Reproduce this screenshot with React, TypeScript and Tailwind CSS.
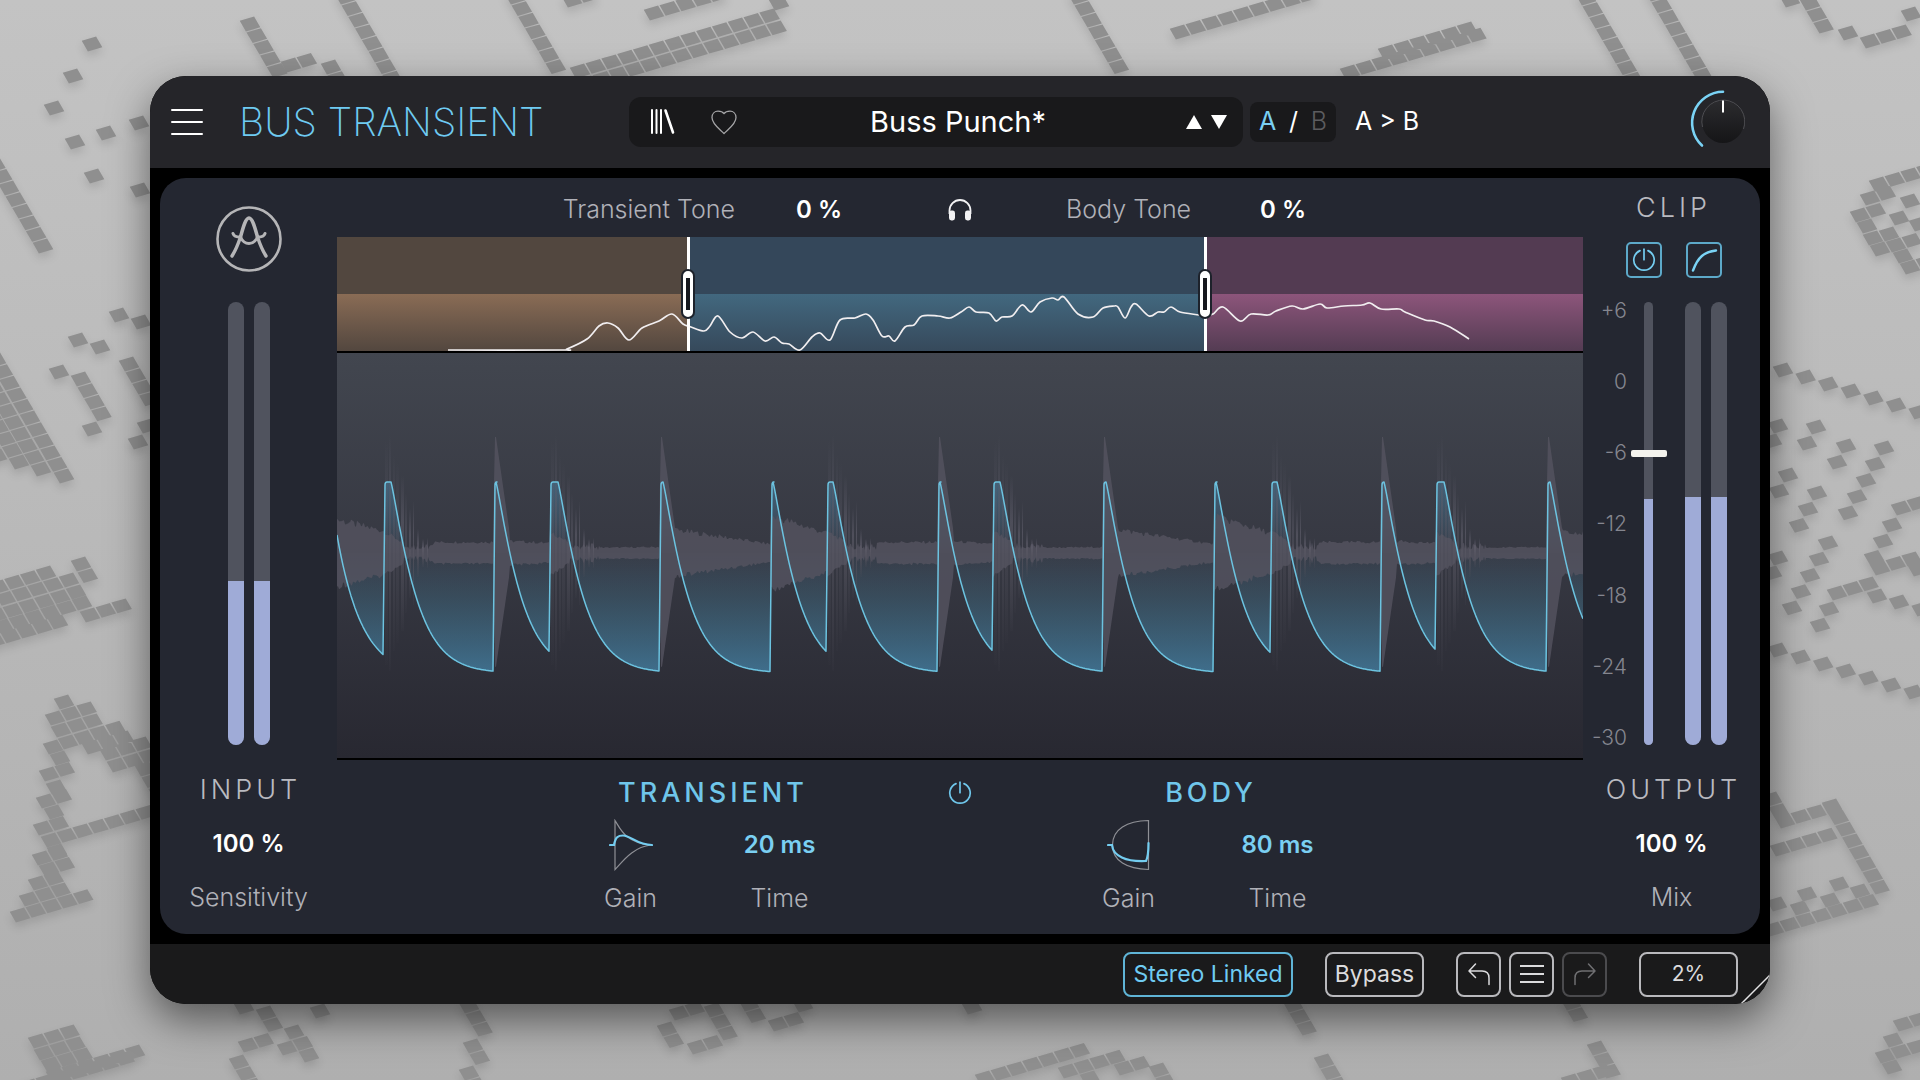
import { useState } from 'react';

// One tile of the backdrop grid: u runs along a row, v down a column
const U = [15.8, -4.6];
const V = [6.8, 11.6];

// [x, y, count, step along u, step along v], x and y being the centre of the first tile
const TILE_RUNS = [
  // top left
  [92, 44, 1, 0, 0], [73, 76, 1, 0, 0], [54, 108, 1, 0, 0], [75, 142, 1, 0, 0],
  [106, 133, 1, 0, 0], [139, 123, 1, 0, 0], [94, 176, 1, 0, 0], [140, 190, 1, 0, 0],
  [250, 24, 5, 0, 1], [291, 65, 2, 1, 0], [331, 67, 2, 0, 1],
  [345, -3, 8, 0, 1], [515, -3, 7, 0, 1],
  [580, 71, 13, 1, 0], [587, 83, 13, 1, 0], [654, 13, 5, 1, 0], [779, 3, 1, 0, 0], [572, 0, 2, 1, 0],
  // left edge
  [43, 246, 8, 0, -1],
  [119, 315, 1, 0, 0], [141, 322, 1, 0, 0], [78, 340, 1, 0, 0], [100, 347, 1, 0, 0],
  [59, 372, 1, 0, 0], [81, 379, 4, 0, 1], [92, 429, 1, 0, 0], [129, 364, 4, 0, 1],
  [147, 426, 1, 0, 0], [138, 442, 1, 0, 0],
  [64, 476, 11, 0, -1], [41, 469, 10, 0, -1], [19, 462, 8, 0, -1], [-3, 456, 6, 0, -1],
  [81, 564, 2, 0, 1], [46, 573, 4, -1, 0], [69, 580, 6, -1, 0], [76, 592, 6, -1, 0],
  [82, 603, 6, -1, 0], [58, 622, 5, -1, 0], [90, 615, 3, 1, 0],
  // lower left
  [64, 702, 1, 0, 0], [55, 718, 3, 1, 0], [61, 730, 3, 1, 0], [68, 742, 4, 1, 0],
  [92, 747, 3, 1, 0], [110, 753, 3, 1, 0], [117, 765, 3, 1, 0], [145, 769, 3, 0, 1],
  [53, 747, 1, 0, 0], [60, 758, 1, 0, 0], [49, 774, 2, 1, 0], [56, 787, 1, 0, 0],
  [46, 801, 2, 1, 0], [54, 812, 1, 0, 0], [43, 828, 2, 1, 0], [51, 840, 7, 1, 0],
  [57, 851, 1, 0, 0], [42, 858, 2, 1, 0], [49, 869, 2, 1, 0], [38, 883, 2, 1, 0],
  [29, 899, 3, 1, 0], [20, 915, 5, 1, 0],
  [38, 1041, 3, 1, 0], [44, 1053, 3, 1, 0], [51, 1064, 3, 1, 0], [56, 1075, 6, 1, 0], [30, 1086, 7, 1, 0],
  [244, 1007, 1, 0, 0], [266, 1013, 2, 0, 1], [248, 1045, 2, 1, 0], [294, 1032, 1, 0, 0],
  [287, 1048, 2, 1, 0], [309, 1055, 1, 0, 0], [239, 1062, 3, 0, 1], [320, 1011, 1, 0, 0],
  // bottom edge
  [469, 1006, 3, 0, 1], [473, 1046, 2, 0, 1], [469, 1073, 2, 0, 1],
  [679, 1013, 2, 1, 0], [714, 1010, 3, 0, 1], [667, 1029, 2, 0, 1], [697, 1047, 2, 1, 0],
  [749, 1004, 2, 0, 1], [778, 1024, 2, 1, 0], [803, 1005, 1, 0, 0], [972, 1007, 1, 0, 0],
  [985, 1078, 7, 1, 0], [1068, 1071, 4, 1, 0], [1124, 1068, 2, 1, 0], [1159, 1070, 2, 0, 1], [1090, 1078, 1, 0, 0],
  [1293, 1005, 3, 0, 1], [1324, 1061, 3, 0, 1], [1571, 1003, 2, 0, 1], [1597, 1048, 3, 0, 1], [1571, 1081, 3, 1, 0],
  // top right
  [1078, -3, 7, 0, 1], [1180, 32, 9, 1, 0], [1350, 72, 9, 1, 0], [1388, 52, 6, 1, 0],
  [1586, -2, 8, 0, 1], [1655, -6, 8, 0, 1],
  [1790, 0, 1, 0, 0], [1810, 3, 3, 0, 1], [1848, 33, 1, 0, 0], [1870, 41, 3, 1, 0], [1911, 14, 1, 0, 0],
  [1879, 184, 4, 1, 0], [1870, 198, 2, 1, 0], [1910, 201, 1, 0, 0], [1860, 215, 2, 1, 0],
  [1867, 226, 1, 0, 0], [1873, 238, 1, 0, 0], [1880, 249, 1, 0, 0], [1899, 218, 1, 0, 0],
  [1919, 224, 1, 0, 0], [1889, 234, 1, 0, 0], [1896, 245, 2, 1, 0], [1903, 256, 1, 0, 0], [1910, 267, 2, 1, 0],
  // right edge
  [1783, 370, 7, 1, 1], [1778, 426, 1, 0, 0], [1772, 441, 1, 0, 0], [1816, 427, 2, -1, 1],
  [1846, 446, 2, -1, 1], [1884, 448, 5, -1, 1], [1788, 475, 2, -1, 1], [1817, 493, 3, -1, 1],
  [1828, 543, 5, -1, 1], [1778, 558, 1, 0, 0], [1772, 573, 1, 0, 0],
  [1901, 508, 2, 1, 0], [1892, 525, 3, -1, 1], [1880, 568, 3, 1, 0], [1918, 569, 1, 0, 0],
  [1837, 593, 3, 1, 0], [1829, 609, 2, -1, 1], [1877, 596, 1, 0, 0], [1899, 602, 2, 1, 1],
  [1778, 650, 7, 1, 1],
  [1772, 799, 2, 0, 1], [1785, 821, 4, 1, 0], [1832, 806, 8, 0, 1], [1780, 849, 4, 1, 0],
  [1777, 904, 1, 0, 0], [1807, 894, 1, 0, 0], [1839, 884, 1, 0, 0], [1800, 908, 1, 0, 0],
  [1830, 900, 1, 0, 0], [1860, 891, 1, 0, 0], [1774, 929, 7, 1, 0],
  [1903, 1024, 2, 1, 0], [1893, 1040, 1, 0, 0], [1885, 1056, 3, 1, 0], [1892, 1067, 1, 0, 0],
];

function tilePath() {
  const s = 0.455;
  const corners = [[-s, -s], [s, -s], [s, s], [-s, s]];
  return TILE_RUNS.flatMap(([x, y, n, du, dv]) =>
    Array.from({ length: n }, (_, i) => {
      const cx = x + i * (du * U[0] + dv * V[0]);
      const cy = y + i * (du * U[1] + dv * V[1]);
      const pts = corners.map(([a, b]) => `${(cx + a * U[0] + b * V[0]).toFixed(1)} ${(cy + a * U[1] + b * V[1]).toFixed(1)}`);
      return `M${pts.join('L')}Z`;
    })
  ).join('');
}

const SPECTRUM = [
  [111, 113], [224, 113], [230, 112], [250, 102], [262, 89], [271, 86], [281, 91], [292, 103], [305, 91], [322, 84],
  [335, 77], [346, 87], [354, 90], [367, 94], [373, 89], [381, 79], [393, 95], [405, 101], [416, 95], [428, 104],
  [437, 100], [445, 106], [452, 107], [463, 113], [475, 100], [483, 96], [493, 103], [503, 83], [518, 81], [529, 77],
  [536, 83], [545, 99], [552, 99], [558, 104], [568, 90], [577, 88], [585, 79], [601, 79], [613, 81], [624, 75],
  [632, 70], [639, 75], [652, 76], [659, 84], [665, 80], [675, 79], [685, 68], [694, 75], [703, 65], [715, 61],
  [721, 63], [727, 60], [741, 77], [756, 80], [766, 71], [777, 69], [781, 70], [788, 81], [794, 70], [799, 67],
  [812, 79], [821, 75], [827, 75], [834, 70], [843, 75], [862, 78], [868, 79], [876, 77], [886, 70], [903, 84],
  [914, 77], [931, 78], [939, 74], [955, 69], [966, 72], [983, 67], [990, 71], [1007, 69], [1025, 68], [1033, 66],
  [1044, 72], [1062, 72], [1068, 75], [1088, 83], [1097, 84], [1113, 90], [1132, 102],
];

function smoothPath(points: number[][]) {
  let d = `M${points[0][0]} ${points[0][1]}`;
  for (let i = 0; i < points.length - 1; i++) {
    const p0 = points[i - 1] || points[i];
    const [p1, p2] = [points[i], points[i + 1]];
    const p3 = points[i + 2] || p2;
    d += `C${(p1[0] + (p2[0] - p0[0]) / 6).toFixed(1)} ${(p1[1] + (p2[1] - p0[1]) / 6).toFixed(1)} ${(p2[0] - (p3[0] - p1[0]) / 6).toFixed(1)} ${(p2[1] - (p3[1] - p1[1]) / 6).toFixed(1)} ${p2[0]} ${p2[1]}`;
  }
  return d;
}

const MID = 200;

// kick = fuzzy burst with a held peak, snare = sharp tapered spike, swell = no spike, loud body
// body: half height of the waveform after the hit, [from, to]
const HITS = [
  { x: 47, hold: 6, kind: 'kick', body: [11, 11] },
  { x: 157, hold: 1, kind: 'snare', body: [13, 10] },
  { x: 213, hold: 7, kind: 'kick', body: [5, 6] },
  { x: 323, hold: 2, kind: 'snare', body: [26, 9] },
  { x: 434, hold: 1, kind: 'swell', body: [38, 20] },
  { x: 490, hold: 5, kind: 'kick', body: [11, 11] },
  { x: 601, hold: 1, kind: 'snare', body: [13, 9] },
  { x: 656, hold: 6, kind: 'kick', body: [5, 6] },
  { x: 766, hold: 2, kind: 'snare', body: [26, 9] },
  { x: 877, hold: 1, kind: 'swell', body: [38, 20] },
  { x: 934, hold: 5, kind: 'kick', body: [11, 11] },
  { x: 1044, hold: 2, kind: 'snare', body: [13, 10] },
  { x: 1099, hold: 7, kind: 'kick', body: [5, 6] },
  { x: 1210, hold: 2, kind: 'snare', body: [26, 16] },
];

// [offset from the hit, half height, width, opacity]
const BURST = [
  [1, 112, 3, 0.3], [5, 118, 2, 0.45], [9, 98, 2, 0.35], [12, 90, 3, 0.3], [17, 78, 3, 0.55],
  [21, 60, 2, 0.4], [25, 45, 2, 0.6], [29, 52, 1, 0.65], [33, 24, 2, 0.6], [38, 14, 2, 0.7], [43, 15, 1, 0.7],
];

function envelopePath() {
  // tail of the hit that came before the window
  let d = 'M0 182';
  for (let t = 2; t <= 46; t += 2) d += `L${t} ${(324 - 142 * Math.exp(-t / 25)).toFixed(1)}`;
  HITS.forEach((hit, i) => {
    const end = i < HITS.length - 1 ? HITS[i + 1].x - 1 : 1246;
    const start = hit.x + 1 + hit.hold;
    d += `L${hit.x + 1} 132Q${hit.x + 1} 129 ${hit.x + 3} 129L${start} 129`;
    for (let t = 1; t <= end - start; t++) {
      const drop = Math.exp(-Math.pow(t / 27, 1.15));
      d += `L${start + t} ${(320 - 191 * drop).toFixed(1)}`;
    }
  });
  return d;
}

function wavePath() {
  const noise = (n: number) => {
    const v = Math.sin(n * 12.9898) * 43758.5453;
    return v - Math.floor(v);
  };
  const top: string[] = [];
  const bottom: string[] = [];
  for (let x = 0; x <= 1246; x++) {
    const i = HITS.findIndex((h, k) => x >= h.x && (k === HITS.length - 1 || x < HITS[k + 1].x));
    const hit = HITS[i];
    let amp = 34 - x * 0.25;
    let spike = false;
    if (hit) {
      const end = i < HITS.length - 1 ? HITS[i + 1].x : hit.x + 60;
      const t = x - hit.x;
      const p = Math.min(1, t / (end - hit.x));
      amp = hit.body[0] + (hit.body[1] - hit.body[0]) * p;
      if (hit.kind === 'snare' && t < 16) {
        spike = true;
        amp = Math.max(amp, t < 2 ? 70 + t * 46 : 116 - (t - 2) * 7);
      }
      if (hit.kind === 'kick') amp = t < 20 ? 22 - t * 0.6 : t < 50 ? 3 + noise(x) * 7 : amp;
    }
    const step = Math.floor(x / 2);
    top.push(`${x} ${(MID - amp * (spike ? 1 : 0.86 + noise(step + 3) * 0.24)).toFixed(1)}`);
    bottom.push(`${x} ${(MID + amp * (spike ? 0.98 : 0.88 + noise(step + 9) * 0.2)).toFixed(1)}`);
  }
  return `M${top.join('L')}L${bottom.reverse().join('L')}Z`;
}

const SCALE = ['+6', '0', '-6', '-12', '-18', '-24', '-30'];

function PowerIcon({ className = '' }) {
  return (
    <svg viewBox="0 0 24 24" className={className} fill="none" stroke="currentColor" strokeWidth="1.7" strokeLinecap="round" aria-hidden="true">
      <path d="M8 2.6a10.2 10.2 0 1 0 8 0" />
      <path d="M12 1.2v10.5" />
    </svg>
  );
}

function Logo() {
  return (
    <svg viewBox="0 0 66 66" className="size-[66px]" fill="none" stroke="#b5b5b7" strokeLinecap="round" strokeLinejoin="round" aria-label="Logo">
      <circle cx="33" cy="33" r="31.5" strokeWidth="2.6" />
      <path d="M24.5 31C27 22 29.5 12 33 12S39 22 41.5 31" strokeWidth="3.6" />
      <path d="M24.5 31C22.5 37 20.5 43 16 50M41.5 31C43.5 37 45.5 43 50 50" strokeWidth="3.4" />
      <path d="M17 27.5C18 30.5 20 31 24.5 31C26.5 35.5 29.5 37.5 33 37.5S39.5 35.5 41.5 31C46 31 48 30.5 49 27.5" strokeWidth="3" />
    </svg>
  );
}

function Meter({ level }: { level: number }) {
  return (
    <div className="flex h-full w-4 flex-col justify-end overflow-hidden rounded-full bg-[#50535e]">
      <div className="bg-[#9fabd7]" style={{ height: `${level}%` }} />
    </div>
  );
}

function SideValue({ title, value, label }: { title: string; value: string; label: string }) {
  return (
    <div className="flex w-full flex-col items-center pt-[21px]">
      <h2 className="flex h-[48px] items-center pl-1 text-[27px] font-light tracking-[4px] text-[#b9bac0]">{title}</h2>
      <div className="flex h-[60px] items-center text-2xl font-semibold text-white">{value}</div>
      <div className="flex h-[48px] items-center text-[25px] font-light text-[#b0b1b8]">{label}</div>
    </div>
  );
}

function GainTime({ title, time, children }: { title: string; time: string; children: React.ReactNode }) {
  return (
    <section className="grid w-[298px] grid-cols-2 justify-items-center">
      <h2 className="col-span-2 flex h-[50px] items-center pl-4 text-[27px] font-medium tracking-[4px] text-[#6fc6ea]">{title}</h2>
      <button type="button" aria-label={`${title} gain`} className="flex h-[54px] items-center">{children}</button>
      <div className="flex h-[54px] items-center text-2xl font-semibold text-[#7acff2]">{time}</div>
      <div className="flex h-[54px] items-center text-[25px] font-light text-[#b0b1b8]">Gain</div>
      <div className="flex h-[54px] items-center text-[25px] font-light text-[#b0b1b8]">Time</div>
    </section>
  );
}

function Handle({ className, label }: { className: string; label: string }) {
  return (
    <button type="button" aria-label={label} className={`absolute inset-y-0 flex w-[14px] -translate-x-1/2 items-center justify-center ${className}`}>
      <span className="absolute inset-y-0 w-[3px] bg-white" />
      <span className="relative h-[46px] w-[10px] rounded-full border-x-[3px] border-y-[7px] border-white bg-[#16181e] ring-2 ring-[#1d222b]" />
    </button>
  );
}

function Header() {
  return (
    <header className="flex h-[92px] items-center bg-[#252529] pr-[25px] pl-[21px]">
      <button type="button" aria-label="Menu" className="flex w-8 shrink-0 flex-col gap-[10px]">
        <span className="h-[2px] rounded-full bg-white" />
        <span className="h-[2px] rounded-full bg-white" />
        <span className="h-[2px] rounded-full bg-white" />
      </button>
      <h1 className="w-[426px] shrink-0 pl-[36px] text-[39px] font-extralight whitespace-nowrap text-[#6fcbf2]">BUS TRANSIENT</h1>

      <div className="flex h-[50px] w-[614px] items-center rounded-xl bg-[#19191b] px-4">
        <button type="button" aria-label="Library" className="ml-1">
          <svg viewBox="0 0 28 28" className="size-7" stroke="#fff" strokeWidth="2" strokeLinecap="round" aria-hidden="true">
            <path d="M3 2v23M7.5 2v23M12 2v23" />
            <path d="M16.5 2.500l7.5 22" strokeWidth="2.6" />
          </svg>
        </button>
        <button type="button" aria-label="Favourite" className="ml-[33px]">
          <svg viewBox="0 0 28 26" className="h-[26px] w-7" fill="none" stroke="#a4a4a6" strokeWidth="1.3" strokeLinejoin="round" aria-hidden="true">
            <path d="M14 24.500C11 21 2 15.500 2 8.500C2 4.500 4.800 2.200 8 2.200C11 2.200 13 3.200 14 4.600C15 3.200 17 2.200 20 2.200C23.200 2.200 26 4.500 26 8.500C26 15.500 17 21 14 24.500Z" />
          </svg>
        </button>
        <button type="button" className="flex-1 pr-2 text-center text-[29px] text-white">Buss Punch*</button>
        <button type="button" aria-label="Previous preset">
          <svg viewBox="0 0 16 14" className="h-3.5 w-4" fill="#fff" aria-hidden="true"><path d="M8 0l8 14H0z" /></svg>
        </button>
        <button type="button" aria-label="Next preset" className="ml-[9px]">
          <svg viewBox="0 0 16 14" className="h-3.5 w-4" fill="#fff" aria-hidden="true"><path d="M8 14l8-14H0z" /></svg>
        </button>
      </div>

      <div className="ml-[7px] flex h-10 w-[86px] items-center justify-between rounded-lg bg-[#19191b] px-[9px] text-[25px]">
        <button type="button" className="text-[#7acff2]">A</button>
        <span className="text-white">/</span>
        <button type="button" className="font-light text-[#5c5c5f]">B</button>
      </div>
      <button type="button" className="ml-[19px] text-[25px] whitespace-nowrap text-white">A &gt; B</button>

      <button type="button" aria-label="Macro" className="ml-auto">
        <svg viewBox="0 0 64 64" className="size-16" fill="none" aria-hidden="true">
          <defs>
            <linearGradient id="knob" x1="0" y1="0" x2="0" y2="1">
              <stop offset="0" stopColor="#2b2b2e" />
              <stop offset="1" stopColor="#151517" />
            </linearGradient>
          </defs>
          <circle cx="42" cy="32" r="21" fill="url(#knob)" />
          <path d="M21.5 37a21.5 21.5 0 1 1 41 2" stroke="#4d4d51" />
          <path d="M42 10.5v12" stroke="#fff" strokeWidth="2" />
          <path d="M42 1.8A31 31 0 0 0 21 55.5" stroke="#7ad3f5" strokeWidth="2.6" strokeLinecap="round" />
        </svg>
      </button>
    </header>
  );
}

function Graph() {
  const envelope = envelopePath();
  return (
    <div>
      <div className="relative flex h-[114px]">
        <div className="flex w-[28.2%] flex-col bg-[#52473f]">
          <div className="mt-auto h-1/2 bg-linear-to-b from-[#8a6c55] to-[#53473f]" />
        </div>
        <div className="flex w-[41.5%] flex-col bg-[#34475a]">
          <div className="mt-auto h-1/2 bg-linear-to-b from-[#42687f] to-[#36495b]" />
        </div>
        <div className="flex flex-1 flex-col bg-[#533b52]">
          <div className="mt-auto h-1/2 bg-linear-to-b from-[#8d557b] to-[#543c53]" />
        </div>
        <svg viewBox="0 0 1246 114" preserveAspectRatio="none" className="absolute inset-0 size-full" fill="none" aria-hidden="true">
          <path d={smoothPath(SPECTRUM)} stroke="#f1eef0" strokeWidth="1.7" strokeLinejoin="round" />
        </svg>
        <Handle className="left-[28.2%]" label="Low crossover" />
        <Handle className="left-[69.7%]" label="High crossover" />
      </div>

      <div className="border-y-2 border-black bg-linear-to-b from-[#42464f] via-[#363842] to-[#282831]">
        <svg viewBox="0 0 1246 405" preserveAspectRatio="none" className="block h-[405px] w-full" aria-label="Waveform">
          <defs>
            <linearGradient id="env" gradientUnits="userSpaceOnUse" x1="0" y1="129" x2="0" y2="320">
              <stop offset="0" stopColor="#4a86ab" stopOpacity="0.5" />
              <stop offset="0.37" stopColor="#4a86ab" stopOpacity="0.05" />
              <stop offset="0.6" stopColor="#4587a6" stopOpacity="0.28" />
              <stop offset="1" stopColor="#4687ad" stopOpacity="0.72" />
            </linearGradient>
            <linearGradient id="burst" x1="0" y1="0" x2="0" y2="1">
              <stop offset="0" stopColor="#62616f" stopOpacity="0" />
              <stop offset="0.3" stopColor="#5f5e6b" />
              <stop offset="0.6" stopColor="#55545f" />
              <stop offset="1" stopColor="#55545f" stopOpacity="0.1" />
            </linearGradient>
          </defs>
          <path d={`${envelope}V${MID}H0Z`} fill="url(#env)" />
          <path d={wavePath()} fill="#555460" fillOpacity="0.8" />
          {HITS.filter((h) => h.kind === 'kick').map((h) =>
            BURST.map(([dx, half, w, opacity]) => (
              <rect key={`${h.x}-${dx}`} x={h.x + dx} y={MID - half} width={w} height={half * 2} fill="url(#burst)" opacity={opacity} />
            ))
          )}
          <path d={envelope} fill="none" stroke="#6cc3e0" strokeWidth="1.5" strokeLinejoin="round" />
        </svg>
      </div>
    </div>
  );
}

function Footer({ linked, onLink }: { linked: boolean; onLink: () => void }) {
  const box = 'flex h-[45px] items-center justify-center rounded-lg border-2';
  return (
    <footer className="relative mt-[10px] flex h-[60px] items-center justify-end bg-[#1a1a1b] pr-[32px] text-[23px] text-[#dcdcde]">
      <button type="button" onClick={onLink} className={`${box} w-[170px] whitespace-nowrap ${linked ? 'border-[#5fb4d6] text-[#6fcbf2]' : 'border-[#b9b9bd]'}`}>
        Stereo Linked
      </button>
      <button type="button" className={`${box} ml-8 w-[99px] border-[#b9b9bd]`}>Bypass</button>
      <button type="button" aria-label="Undo" className={`${box} ml-8 w-[45px] border-[#b9b9bd]`}>
        <svg viewBox="0 0 24 24" className="size-6" fill="none" stroke="currentColor" strokeWidth="1.5" strokeLinecap="round" strokeLinejoin="round" aria-hidden="true">
          <path d="M8.5 2L2 9l6.5 6.5M2.5 9H15c4.5 0 7 2.500 7 7v6.5" />
        </svg>
      </button>
      <button type="button" aria-label="History" className={`${box} ml-2 w-[45px] border-[#b9b9bd]`}>
        <svg viewBox="0 0 24 24" className="size-6" stroke="currentColor" strokeWidth="2" aria-hidden="true">
          <path d="M0 4h24M0 12h24M0 20h24" />
        </svg>
      </button>
      <button type="button" aria-label="Redo" className={`${box} ml-2 w-[45px] border-[#4b4b4e] text-[#6f6f72]`}>
        <svg viewBox="0 0 24 24" className="size-6" fill="none" stroke="currentColor" strokeWidth="1.5" strokeLinecap="round" strokeLinejoin="round" aria-hidden="true">
          <path d="M15.5 2L22 9l-6.5 6.5M21.5 9H9c-4.5 0-7 2.500-7 7v6.5" />
        </svg>
      </button>
      <button type="button" className={`${box} ml-8 w-[99px] border-[#b9b9bd] text-[21px]`}>2%</button>
      <svg viewBox="0 0 30 30" className="absolute right-0 bottom-0 size-[30px]" stroke="#e4e4e6" strokeWidth="1.5" aria-hidden="true">
        <path d="M1 30L30 1" />
      </svg>
    </footer>
  );
}

export default function App() {
  const [linked, setLinked] = useState(true);
  const [clip, setClip] = useState(66);

  return (
    <div className="relative isolate min-h-screen overflow-hidden bg-linear-to-b from-[#c3c3c3] to-[#afafaf] px-[150px] py-[76px] font-['Inter',sans-serif]">
      <svg viewBox="0 0 1920 1080" preserveAspectRatio="xMidYMid slice" className="absolute inset-0 -z-10 size-full" aria-hidden="true">
        <path d={tilePath()} fill="#8f8f8f" className="drop-shadow-[0_5px_4px_rgba(0,0,0,0.12)]" />
      </svg>

      <div className="overflow-hidden rounded-[36px] bg-black shadow-[0_16px_40px_rgba(0,0,0,0.5)]">
        <Header />

        <main className="mx-[10px] mt-[10px] grid grid-cols-[177px_1fr_177px] rounded-[26px] bg-[#242731] pb-[8px]">
          <div className="flex flex-col items-center pt-[28px]">
            <Logo />
            <div className="mt-[30px] flex h-[443px] gap-[10px]">
              <Meter level={37} />
              <Meter level={37} />
            </div>
            <SideValue title="INPUT" value="100 %" label="Sensitivity" />
          </div>

          <div>
            <div className="grid h-[59px] grid-cols-[1fr_40px_1fr] items-center pt-[4px] text-[25px] font-light text-[#b0b1b8]">
              <div className="flex items-center justify-end gap-[61px] pr-[98px]">
                <span>Transient Tone</span>
                <span className="text-2xl font-semibold text-white">0 %</span>
              </div>
              <button type="button" aria-label="Listen" className="justify-self-center">
                <svg viewBox="0 0 24 22" className="h-[22px] w-6" aria-hidden="true">
                  <path d="M1.5 15v-3.500a10.500 10.500 0 0 1 21 0V15" fill="none" stroke="#f2f2f4" strokeWidth="1.8" />
                  <rect x="1" y="11.5" width="6" height="10" rx="2.4" fill="#f2f2f4" />
                  <rect x="17" y="11.5" width="6" height="10" rx="2.4" fill="#f2f2f4" />
                </svg>
              </button>
              <div className="flex items-center gap-[69px] pl-[86px]">
                <span>Body Tone</span>
                <span className="text-2xl font-semibold text-white">0 %</span>
              </div>
            </div>

            <Graph />

            <div className="grid grid-cols-[1fr_40px_1fr] pt-[8px]">
              <div className="flex justify-end pr-[86px]">
                <GainTime title="TRANSIENT" time="20 ms">
                  <svg viewBox="0 0 44 52" className="h-[52px] w-[44px]" fill="none" aria-hidden="true">
                    <path d="M6 26V1.500C11 9 16 24 42 26C24 28 14 42 6 50.500Z" stroke="#8f9096" strokeWidth="1.2" />
                    <path d="M1 26H5C6.500 18 9 16.500 14 16.500C22 16.500 28 26 43 26" stroke="#74cdf0" strokeWidth="2.2" strokeLinecap="round" />
                  </svg>
                </GainTime>
              </div>
              <button type="button" aria-label="Enable shaping" className="mt-[13px] size-6 justify-self-center text-[#6fc6ea]">
                <PowerIcon className="size-6" />
              </button>
              <div className="flex pl-[74px]">
                <GainTime title="BODY" time="80 ms">
                  <svg viewBox="0 0 44 52" className="h-[52px] w-[44px]" fill="none" aria-hidden="true">
                    <path d="M41.500 1.500V50.500C20 50 5.500 42 5.500 26S20 2 41.500 1.500Z" stroke="#8f9096" strokeWidth="1.2" />
                    <path d="M1 26H5C6 37 19 43 39 42C41 38 41.500 30 41.500 24" stroke="#74cdf0" strokeWidth="2.2" strokeLinecap="round" />
                  </svg>
                </GainTime>
              </div>
            </div>
          </div>

          <div className="flex flex-col items-center">
            <h2 className="flex h-[60px] items-center pl-1 text-[27px] font-light tracking-[4px] text-[#b9bac0]">CLIP</h2>
            <div className="mt-1 flex gap-6 pl-1">
              <button type="button" aria-label="Clip on" className="flex size-9 items-center justify-center rounded-[5px] border-2 border-[#5da9c9] text-[#74cdf0]">
                <PowerIcon className="size-6" />
              </button>
              <button type="button" aria-label="Soft clip" className="flex size-9 items-center justify-center rounded-[5px] border-2 border-[#5da9c9]">
                <svg viewBox="0 0 28 28" className="size-7" fill="none" stroke="#7ad3f5" strokeWidth="2.4" strokeLinecap="round" aria-hidden="true">
                  <path d="M3 24.500C8 11 14 6 26 4.500" />
                </svg>
              </button>
            </div>
            <div className="mt-6 flex h-[443px] w-full">
              <div className="flex h-[445px] w-[44px] flex-col justify-between text-right text-[21px] leading-[18px] font-light whitespace-nowrap text-[#85868f]" aria-hidden="true">
                {SCALE.map((mark) => <span key={mark}>{mark}</span>)}
              </div>
              <div className="relative ml-[17px] flex w-[9px] flex-col justify-end overflow-visible rounded-full bg-[#50535e]">
                <div className="h-[55.5%] rounded-b-full bg-[#9fabd7]" />
                <input
                  type="range"
                  aria-label="Clip threshold"
                  value={clip}
                  onChange={(e) => setClip(Number(e.target.value))}
                  className="absolute inset-y-0 left-1/2 h-full w-9 -translate-x-1/2 appearance-none bg-transparent [direction:rtl] [writing-mode:vertical-lr] [&::-webkit-slider-thumb]:h-[7px] [&::-webkit-slider-thumb]:w-9 [&::-webkit-slider-thumb]:appearance-none [&::-webkit-slider-thumb]:rounded-[2px] [&::-webkit-slider-thumb]:bg-[#f4f3ee]"
                />
              </div>
              <div className="ml-8 flex gap-[10px]">
                <Meter level={56} />
                <Meter level={56} />
              </div>
            </div>
            <SideValue title="OUTPUT" value="100 %" label="Mix" />
          </div>
        </main>

        <Footer linked={linked} onLink={() => setLinked(!linked)} />
      </div>
    </div>
  );
}
